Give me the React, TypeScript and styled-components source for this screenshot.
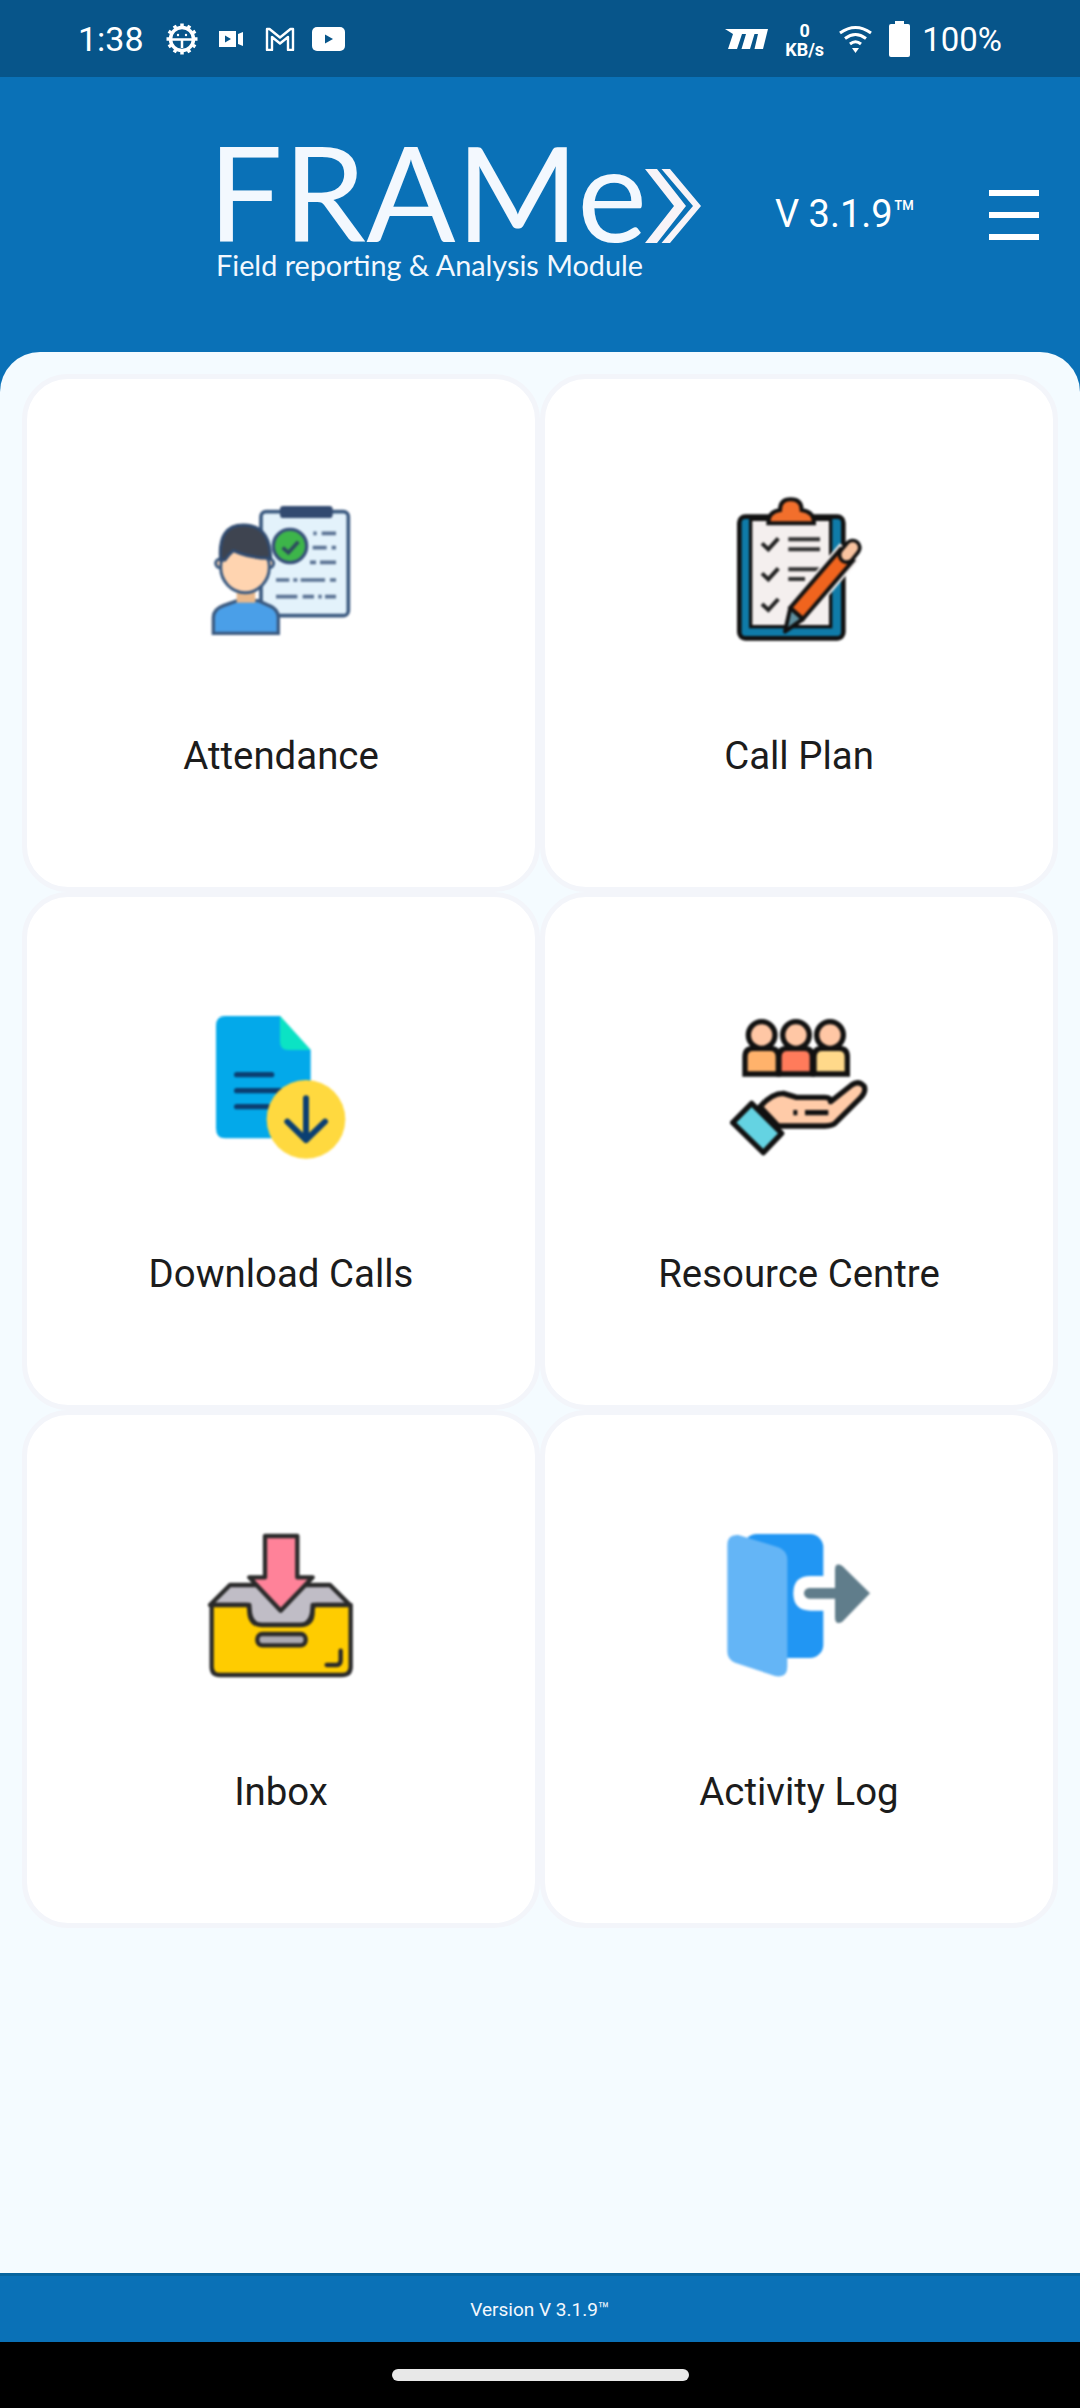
import { FC, ReactNode } from "react";
import styled, { createGlobalStyle } from "styled-components";

const GlobalStyle = createGlobalStyle`
    html, body {
        margin: 0;
        padding: 0;
    }
    body {
        font-family: Roboto, "Liberation Sans", sans-serif;
        background: #000;
    }
`;

const Screen = styled.div`
    display: flex;
    flex-direction: column;
    width: 1080px;
    height: 2408px;
    overflow: hidden;
`;

const StatusBar = styled.div`
    display: flex;
    align-items: center;
    height: 77px;
    padding: 0 78px;
    box-sizing: border-box;
    background: #07558a;
    color: #fff;
    font-size: 34px;
`;

const StatusText = styled.span`
    padding-top: 2px;
    line-height: 77px;
`;

const StatusIcon = styled.svg<{ $gap: number }>`
    display: block;
    margin-left: ${(p) => p.$gap}px;
    flex: none;
`;

const Spacer = styled.div`
    flex: 1;
`;

const Speed = styled.div`
    display: flex;
    flex-direction: column;
    align-items: center;
    width: 41px;
    margin-left: 16px;
    padding-top: 2px;
    font-size: 18px;
    font-weight: 700;
    line-height: 19px;
`;

const BatteryText = styled.span`
    margin-left: 12px;
    padding-top: 2px;
    font-size: 33px;
    line-height: 77px;
`;

const Header = styled.header`
    display: flex;
    align-items: flex-start;
    height: 275px;
    padding-left: 208px;
    box-sizing: border-box;
    background: #0a71b7;
    color: #f3f8fe;
`;

const Logo = styled.div`
    display: flex;
    flex-direction: column;
    width: 509px;
    padding-top: 57px;
`;

const LogoRow = styled.div`
    display: flex;
    align-items: flex-end;
`;

const LogoText = styled.span`
    font-family: Lato, "Open Sans", sans-serif;
    font-size: 132px;
    line-height: 114px;
    letter-spacing: 0.5px;
`;

const Chevrons = styled.svg`
    display: block;
    margin: 0 0 5px -2px;
`;

const LogoTag = styled.span`
    margin-left: 8px;
    font-family: Lato, "Open Sans", sans-serif;
    font-size: 28.8px;
    line-height: 34px;
`;

const Version = styled.div`
    margin: 115px 0 0 58px;
    width: 214px;
    font-size: 38px;
    line-height: 44px;
    color: #fff;
    white-space: nowrap;
`;

const Menu = styled.div`
    display: flex;
    flex-direction: column;
    gap: 16px;
    margin-top: 113px;
    width: 50px;
    span {
        display: block;
        height: 6px;
        background: #fff;
    }
`;

const Main = styled.main`
    flex: 1;
    display: flex;
    background: #0a71b7;
`;

const Sheet = styled.div`
    flex: 1;
    padding: 22px 22px 0;
    border-radius: 40px 40px 0 0;
    background: #f4fbff;
`;

const Grid = styled.div`
    display: grid;
    grid-template-columns: 1fr 1fr;
    grid-auto-rows: 518px;
`;

const Card = styled.div`
    display: flex;
    flex-direction: column;
    align-items: center;
    padding-top: 101px;
    box-sizing: border-box;
    border: 5px solid #f3f5fa;
    border-radius: 46px;
    background: #fff;
`;

const CardIcon = styled.svg`
    display: block;
    flex: none;
    filter: blur(0.8px);
`;

const CardLabel = styled.div`
    margin-top: 85px;
    font-size: 38.4px;
    line-height: 42px;
    color: #1c1c1c;
`;

const Footer = styled.footer`
    display: flex;
    align-items: center;
    justify-content: center;
    height: 69px;
    box-sizing: border-box;
    border-top: 3px solid #07659f;
    background: #0a71b7;
    color: #f3f8fe;
    font-size: 19px;
`;

const NavBar = styled.div`
    display: flex;
    justify-content: center;
    height: 66px;
    padding-top: 27px;
    box-sizing: border-box;
    background: #000;
`;

const HomePill = styled.div`
    width: 297px;
    height: 12px;
    border-radius: 6px;
    background: #e8e8e8;
`;

const IconFrame: FC<{ x: number; y: number; children: ReactNode }> = ({ x, y, children }) => (
    <CardIcon width="200" height="170" viewBox={`${x} ${y} 600 510`}>
        {children}
    </CardIcon>
);

const AttendanceIcon = () => (
    <IconFrame x={3} y={0}>
        <rect x="243" y="95" width="262" height="312" rx="15" fill="#e3f2fb" stroke="#3b5a80" strokeWidth="11" />
        <rect x="300" y="78" width="158" height="36" rx="10" fill="#324a70" />
        <circle cx="330" cy="198" r="50" fill="#3db54a" stroke="#37507a" strokeWidth="10" />
        <path d="M308 203 L325 218 L355 185" fill="none" stroke="#2d4a5f" strokeWidth="11" />
        <path
            d="M400 160h10M425 160h43M398 203h42M455 203h13M390 247h18M420 247h48M288 300h40M340 300h12M362 300h73M450 300h18M288 350h64M368 350h34M415 350h10M435 350h33"
            fill="none"
            stroke="#5b7394"
            strokeWidth="11"
        />
        <path
            d="M100 460 L100 412 Q100 388 130 377 L172 362 L235 362 L268 377 Q295 388 295 412 L295 460 Z"
            fill="#4a9fe8"
            stroke="#3b5a80"
            strokeWidth="10"
        />
        <rect x="170" y="330" width="56" height="38" fill="#e9b98c" />
        <circle cx="120" cy="250" r="13" fill="#ffd4b0" stroke="#3b5a80" strokeWidth="9" />
        <circle cx="268" cy="250" r="13" fill="#ffd4b0" stroke="#3b5a80" strokeWidth="9" />
        <ellipse cx="195" cy="262" rx="73" ry="76" fill="#ffd4b0" stroke="#3b5a80" strokeWidth="9" />
        <path
            d="M122 240 Q112 135 190 135 Q270 135 272 235 Q210 235 160 212 Q145 225 135 240 Z"
            fill="#3e4450"
            stroke="#304b70"
            strokeWidth="9"
        />
    </IconFrame>
);

const CallPlanIcon = () => (
    <IconFrame x={-3} y={0}>
        <rect x="118" y="110" width="312" height="365" rx="18" fill="#0f7ba8" stroke="#111" strokeWidth="14" />
        <rect x="152" y="118" width="240" height="322" fill="#f4efee" stroke="#111" strokeWidth="10" />
        <path
            d="M205 130 Q205 95 240 90 Q240 58 272 58 Q305 58 305 90 Q342 95 342 130 Z"
            fill="#f26f2c"
            stroke="#111"
            strokeWidth="12"
        />
        <path
            d="M186 190 L205 208 L235 175M186 280 L205 298 L235 265M186 372 L205 390 L235 357"
            fill="none"
            stroke="#222"
            strokeWidth="12"
        />
        <path d="M265 178H360M265 208H360M265 268H360M265 297H315" fill="none" stroke="#333" strokeWidth="12" />
        <path d="M271 383 L421 208 L459 242 L309 417 Z" fill="none" stroke="#f4efee" strokeWidth="26" />
        <path d="M271 383 L309 417 L255 455 Z" fill="#5e8f9e" stroke="#111" strokeWidth="12" strokeLinejoin="round" />
        <path d="M271 383 L421 208 L459 242 L309 417 Z" fill="#f0641e" stroke="#111" strokeWidth="12" />
        <path d="M440 225 L458 203" stroke="#111" strokeWidth="54" strokeLinecap="round" />
        <path d="M440 225 L458 203" stroke="#f8c3a0" strokeWidth="32" strokeLinecap="round" />
    </IconFrame>
);

const DownloadIcon = () => (
    <IconFrame x={-27} y={-6}>
        <path d="M105 48 L270 48 L362 150 L362 415 L105 415 Q78 415 78 385 L78 78 Q78 48 105 48 Z" fill="#03a9ea" />
        <path d="M270 48 L362 150 L295 150 Q270 150 270 125 Z" fill="#0be3c4" />
        <path d="M140 224H245M140 272H270M140 320H240" fill="none" stroke="#0b3f72" strokeWidth="16" strokeLinecap="round" />
        <circle cx="348" cy="358" r="118" fill="#ffd93f" />
        <path
            d="M348 295V420M292 365 L348 420 L405 365"
            fill="none"
            stroke="#0b3f72"
            strokeWidth="18"
            strokeLinecap="round"
            strokeLinejoin="round"
        />
    </IconFrame>
);

const ResourceIcon = () => (
    <IconFrame x={-33} y={-6}>
        <g stroke="#111" strokeWidth="16">
            <path d="M105 222 L105 170 Q105 145 130 145 L180 145 Q205 145 205 170 L205 222 Z" fill="#ffb26b" />
            <path d="M207 222 L207 170 Q207 145 232 145 L282 145 Q307 145 307 170 L307 222 Z" fill="#ff7b5b" />
            <path d="M312 222 L312 170 Q312 145 337 145 L387 145 Q412 145 412 170 L412 222 Z" fill="#ffd98a" />
            <circle cx="155" cy="105" r="40" fill="#ffc7a5" />
            <circle cx="258" cy="105" r="40" fill="#ffc7a5" />
            <circle cx="360" cy="105" r="40" fill="#ffc7a5" />
            <path
                d="M150 320 Q185 280 220 280 L260 292 L345 292 Q362 292 362 305 L425 255 Q445 240 462 258 Q470 275 450 295 L380 365 Q370 378 345 378 L205 378 Z"
                fill="#ffcba8"
                strokeLinejoin="round"
            />
            <path d="M285 338H355M250 338H262" fill="none" />
            <path d="M125 310 L215 400 L160 458 L68 368 Z" fill="#64d3e2" strokeLinejoin="round" />
        </g>
    </IconFrame>
);

const InboxIcon = () => (
    <IconFrame x={-27} y={-12}>
        <g stroke="#2a2a2a" strokeWidth="13" strokeLinejoin="round">
            <path d="M120 195 L420 195 L480 255 L368 255 Q368 315 330 315 L215 315 Q178 315 178 255 L60 255 Z" fill="#c0bdc6" />
            <path d="M225 48 L322 48 L322 172 L368 172 L272 272 L178 172 L225 172 Z" fill="#ff8299" />
            <path
                d="M65 255 L170 255 Q178 255 178 275 Q180 315 215 315 L330 315 Q368 315 368 275 Q368 255 378 255 L482 255 L482 440 Q482 465 455 465 L90 465 Q65 465 65 440 Z"
                fill="#ffcc00"
            />
            <rect x="202" y="342" width="145" height="34" rx="15" fill="#acaab3" />
            <path d="M410 435 L440 435 Q452 435 452 420 L452 392" fill="none" strokeLinecap="round" />
        </g>
    </IconFrame>
);

const ActivityIcon = () => (
    <IconFrame x={-33} y={-12}>
        <rect x="100" y="42" width="240" height="372" rx="40" fill="#2196f3" />
        <path d="M345 168 L302 168 Q250 168 250 220 Q250 272 302 272 L345 272 Z" fill="#fff" />
        <path
            d="M52 75 Q52 42 85 45 L205 82 Q232 92 232 120 L232 440 Q232 475 195 468 L75 428 Q52 418 52 395 Z"
            fill="#64b5f6"
        />
        <path d="M298 220H385" stroke="#607d8b" strokeWidth="32" strokeLinecap="round" />
        <path d="M375 150 Q375 125 397 138 L480 220 L397 305 Q375 318 375 290 Z" fill="#607d8b" />
    </IconFrame>
);

const items = [
    { label: "Attendance", icon: <AttendanceIcon /> },
    { label: "Call Plan", icon: <CallPlanIcon /> },
    { label: "Download Calls", icon: <DownloadIcon /> },
    { label: "Resource Centre", icon: <ResourceIcon /> },
    { label: "Inbox", icon: <InboxIcon /> },
    { label: "Activity Log", icon: <ActivityIcon /> },
];

const gearTeeth = [0, 30, 60, 90, 120, 150, 180, 210, 240, 270, 300, 330];

export default function App() {
    return (
        <Screen>
            <GlobalStyle />
            <StatusBar>
                <StatusText>1:38</StatusText>
                <StatusIcon $gap={22} width="32" height="32" viewBox="0 0 32 32">
                    <g stroke="#fff" fill="none">
                        <circle cx="16" cy="16" r="11.5" strokeWidth="3.5" />
                        {gearTeeth.map((deg) => (
                            <path key={deg} d="M16 0.5v3" strokeWidth="3.5" transform={`rotate(${deg} 16 16)`} />
                        ))}
                        <path d="M6 16.500H26M16 16.500V25" strokeWidth="2.5" />
                    </g>
                    <circle cx="12" cy="12" r="1.2" fill="#fff" />
                    <circle cx="20" cy="12" r="1.2" fill="#fff" />
                </StatusIcon>
                <StatusIcon $gap={21} width="24" height="18" viewBox="0 0 24 18">
                    <path d="M0 1h17v16H0z M19 4l5-2v14l-5-2z" fill="#fff" fillRule="evenodd" />
                    <path d="M6 5.500v7l6-3.500z" fill="#07558a" />
                </StatusIcon>
                <StatusIcon $gap={22} width="30" height="24" viewBox="0 0 30 24">
                    <path
                        d="M2 23V2h2.500L15 10.500 25.500 2H28v21h-5V10l-8 6.500L7 10v13z"
                        fill="none"
                        stroke="#fff"
                        strokeWidth="2.4"
                        strokeLinejoin="round"
                    />
                </StatusIcon>
                <StatusIcon $gap={17} width="33" height="24" viewBox="0 0 33 24">
                    <rect width="33" height="24" rx="5" fill="#fff" />
                    <path d="M13 7.500v9l8-4.500z" fill="#07558a" />
                </StatusIcon>
                <Spacer />
                <StatusIcon $gap={0} width="43" height="20" viewBox="0 0 43 20">
                    <path d="M0 0H43L38 20H29.500L33 5H29.500L25 20H16.500L21 5H17L12 20H3L8 5Z" fill="#fff" />
                </StatusIcon>
                <Speed>
                    <span>0</span>
                    <span>KB/s</span>
                </Speed>
                <StatusIcon $gap={14} width="33" height="28" viewBox="0 0 33 28">
                    <path
                        d="M1 8Q16.500 -3 32 8M6 13.500Q16.500 5.500 27 13.500M11 19Q16.500 14.500 22 19"
                        fill="none"
                        stroke="#fff"
                        strokeWidth="3"
                    />
                    <path d="M13 23h7l-3.500 5z" fill="#fff" />
                </StatusIcon>
                <StatusIcon $gap={17} width="21" height="36" viewBox="0 0 21 36">
                    <path d="M6 0h9v3h4q2 0 2 2v29q0 2-2 2H2q-2 0-2-2V5q0-2 2-2h4z" fill="#fff" />
                </StatusIcon>
                <BatteryText>100%</BatteryText>
            </StatusBar>
            <Header>
                <Logo>
                    <LogoRow>
                        <LogoText>FRAMe</LogoText>
                        <Chevrons width="56" height="74" viewBox="0 0 56 74">
                            <path d="M0 0H12L41 37 12 74H0L29 37Z M16.500 0H25L56 37 25 74H16.500L48 37Z" fill="#f8f4f8" />
                        </Chevrons>
                    </LogoRow>
                    <LogoTag>Field reporting &amp; Analysis Module</LogoTag>
                </Logo>
                <Version>V 3.1.9™</Version>
                <Menu>
                    <span />
                    <span />
                    <span />
                </Menu>
            </Header>
            <Main>
                <Sheet>
                    <Grid>
                        {items.map((item) => (
                            <Card key={item.label}>
                                {item.icon}
                                <CardLabel>{item.label}</CardLabel>
                            </Card>
                        ))}
                    </Grid>
                </Sheet>
            </Main>
            <Footer>Version V 3.1.9™</Footer>
            <NavBar>
                <HomePill />
            </NavBar>
        </Screen>
    );
}
